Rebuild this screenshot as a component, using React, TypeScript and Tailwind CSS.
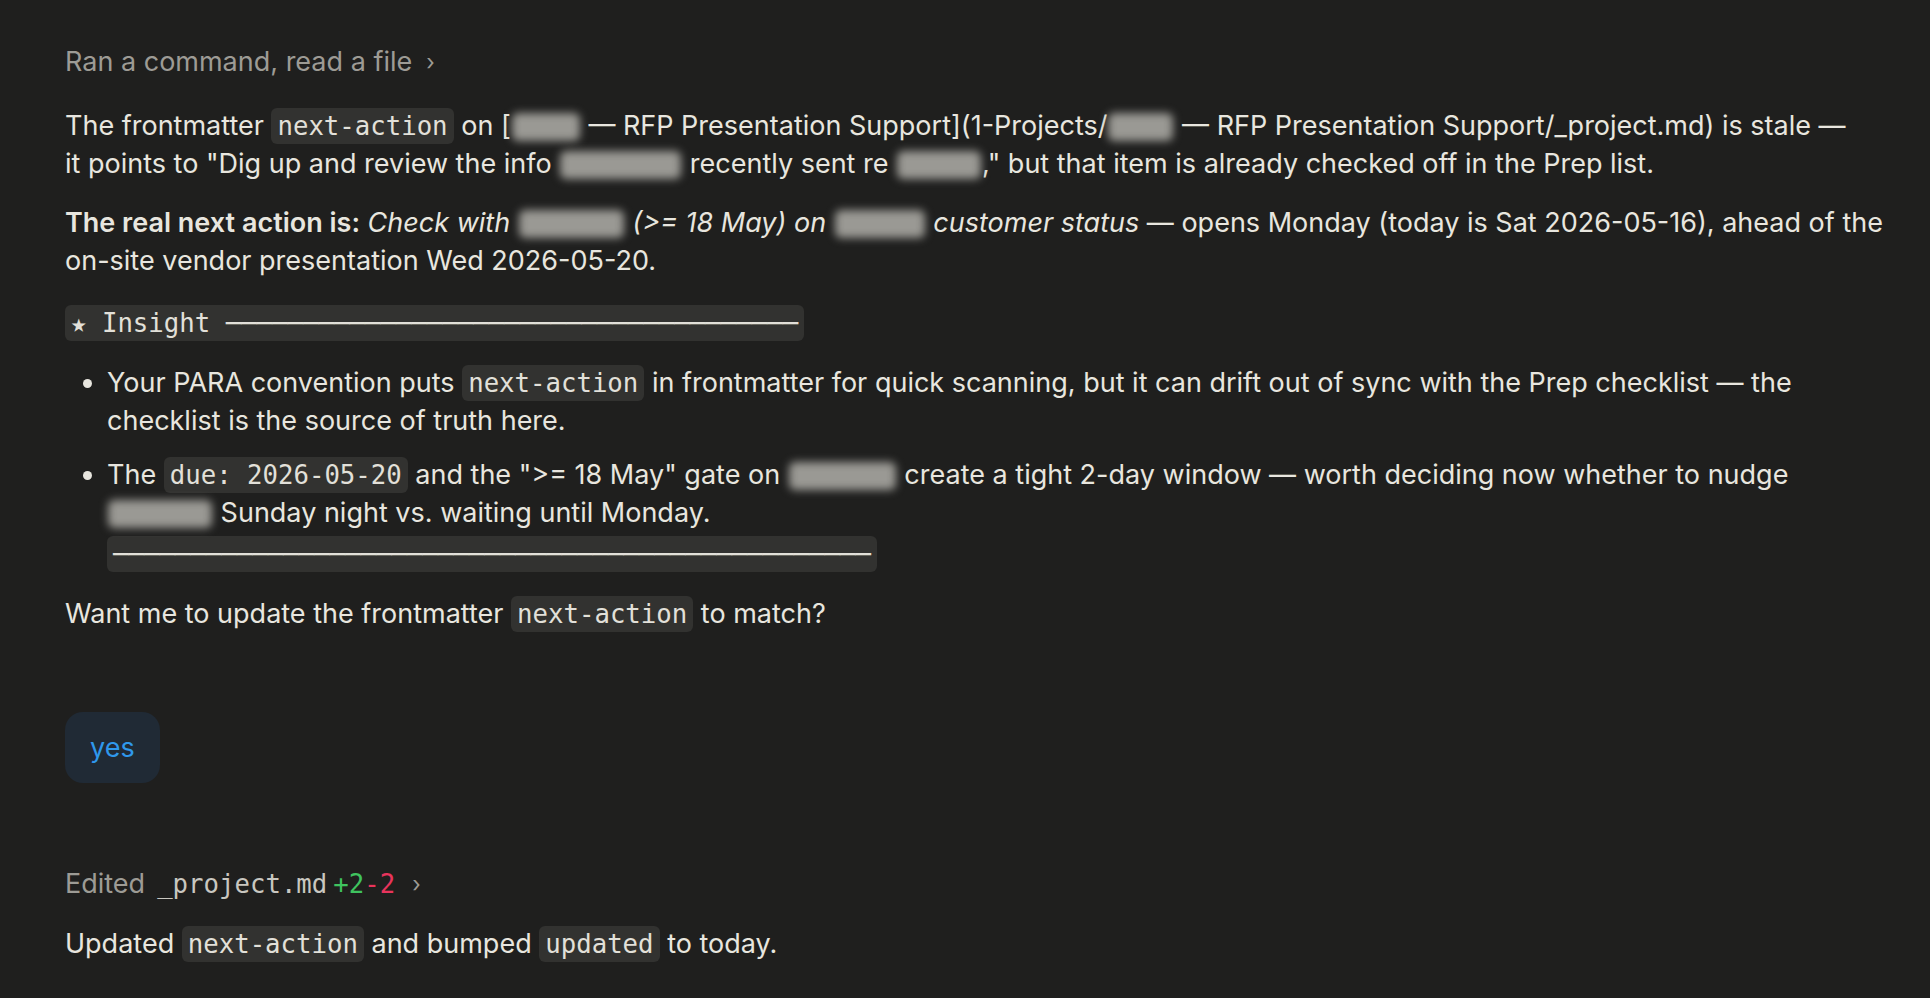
import React from "react";

function Code({ children }: { children: React.ReactNode }) {
  return (
    <code className="rounded-md bg-[#323230] px-[6px] py-[3px] font-['DejaVu_Sans_Mono',monospace] text-[25.7px] text-[#e2e0d9]">
      {children}
    </code>
  );
}

function Blur({ w }: { w: number }) {
  // redacted name, drawn as a fuzzy grey smear
  const widths: Record<number, string> = {
    65: "w-[65px]",
    68: "w-[68px]",
    84: "w-[84px]",
    90: "w-[90px]",
    104: "w-[104px]",
    105: "w-[105px]",
    107: "w-[107px]",
    121: "w-[121px]",
  };
  return (
    <span
      className={`mx-[1px] inline-block h-[28px] ${widths[w]} rounded-md bg-[#9a9994] align-[-6px] blur-[4px]`}
    />
  );
}

export default function App() {
  return (
    <div className="min-h-screen bg-[#1f1f1e] pl-[65px] pr-[30px] pt-[43px] font-['Inter',sans-serif] text-[27px] leading-[38px] text-[#e8e6df]">
      <div className="flex items-center text-[#9d9b95]">
        Ran a command, read a file
        <span className="ml-[14px] text-[22px]">›</span>
      </div>

      <p className="mt-[26px]">
        The frontmatter <Code>next-action</Code> on [<Blur w={68} /> — RFP Presentation
        Support](1-Projects/<Blur w={65} /> — RFP Presentation Support/_project.md) is stale —
        <br />
        it points to "Dig up and review the info <Blur w={121} /> recently sent re <Blur w={84} />
        ," but that item is already checked off in the Prep list.
      </p>

      <p className="mt-[21px] whitespace-nowrap">
        <strong className="font-semibold">The real next action is:</strong>{" "}
        <em>
          Check with <Blur w={105} /> (&gt;= 18 May) on <Blur w={90} /> customer status
        </em>{" "}
        — opens Monday (today is Sat 2026-05-16), ahead of the
        <br />
        on-site vendor presentation Wed 2026-05-20.
      </p>

      <p className="mt-[24px]">
        <Code>★ Insight ─────────────────────────────────────</Code>
      </p>

      <ul className="mt-[22px] list-disc pl-[42px] marker:text-[#e8e6df]">
        <li>
          Your PARA convention puts <Code>next-action</Code> in frontmatter for quick scanning, but it
          can drift out of sync with the Prep checklist — the
          <br />
          checklist is the source of truth here.
        </li>
        <li className="mt-[16px]">
          The <Code>due: 2026-05-20</Code> and the "&gt;= 18 May" gate on <Blur w={107} /> create a
          tight 2-day window — worth deciding now whether to nudge
          <br />
          <Blur w={104} /> Sunday night vs. waiting until Monday.
          <div className="mt-[3px]">
            <Code>─────────────────────────────────────────────────</Code>
          </div>
        </li>
      </ul>

      <p className="mt-[22px]">
        Want me to update the frontmatter <Code>next-action</Code> to match?
      </p>

      <div className="mt-[79px] flex">
        <div className="flex h-[71px] items-center rounded-[18px] bg-[#202a35] px-[25px] text-[#2f98ec]">
          yes
        </div>
      </div>

      <div className="mt-[82px] flex items-center text-[#9d9b95]">
        Edited
        <span className="ml-[12px] font-['DejaVu_Sans_Mono',monospace] text-[25.7px] text-[#c9c7c0]">
          _project.md
        </span>
        <span className="ml-[6px] font-['DejaVu_Sans_Mono',monospace] text-[25.7px] text-[#3fc35f]">+2</span>
        <span className="font-['DejaVu_Sans_Mono',monospace] text-[25.7px] text-[#e8345c]">-2</span>
        <span className="ml-[17px] text-[22px]">›</span>
      </div>

      <p className="mt-[22px]">
        Updated <Code>next-action</Code> and bumped <Code>updated</Code> to today.
      </p>
    </div>
  );
}
